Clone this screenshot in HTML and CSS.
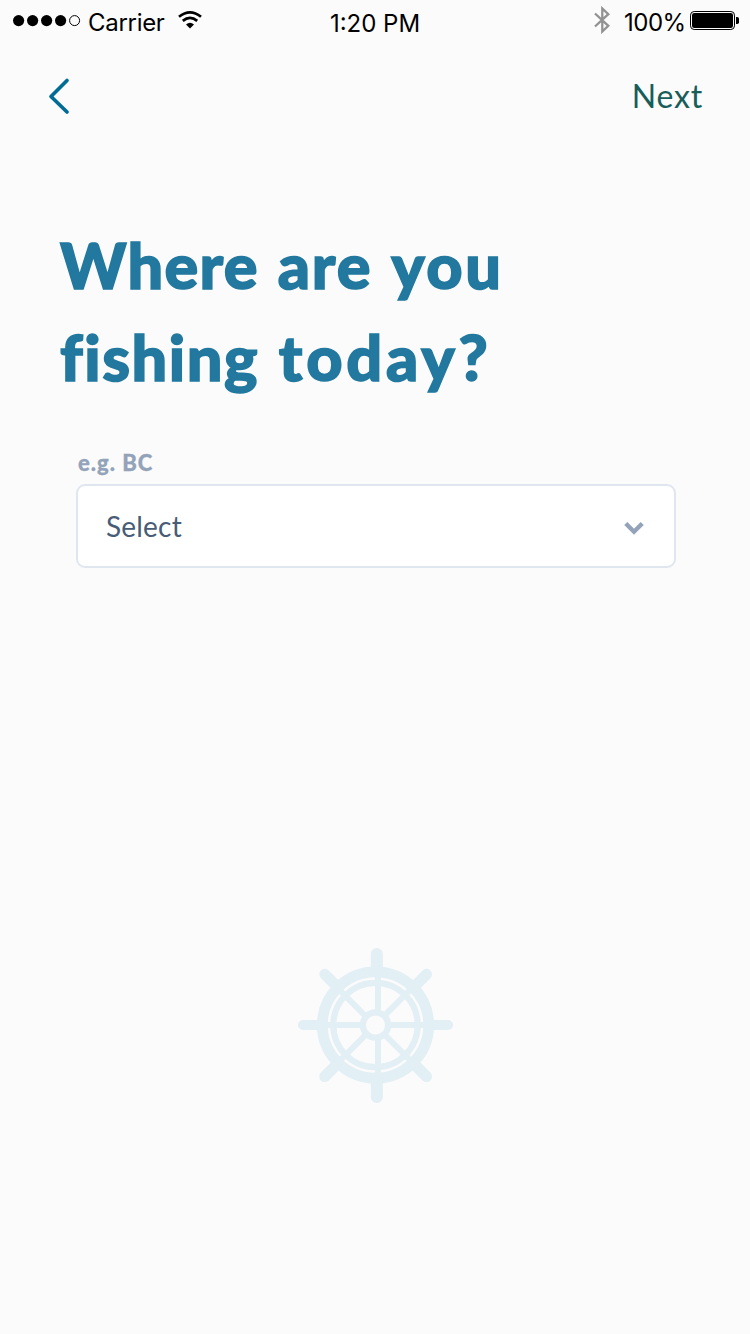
FILE: index.html
```html
<!DOCTYPE html>
<html lang="en">
<head>
<meta charset="utf-8">
<title>Fishing location</title>
<link rel="stylesheet" href="styles.css">
</head>
<body>
<div class="screen">
  <header class="status">
    <div class="status-left">
      <svg class="dots" width="68" height="12" viewBox="0 0 68 12"><circle cx="5.6" cy="5.6" r="5.6"/><circle cx="19.6" cy="5.6" r="5.6"/><circle cx="33.6" cy="5.6" r="5.6"/><circle cx="47.6" cy="5.6" r="5.6"/><circle cx="61.6" cy="5.6" r="5" fill="none" stroke="#000" stroke-width="1"/></svg>
      <span class="carrier">Carrier</span>
      <svg class="wifi" width="24" height="18" viewBox="0 0 24 18"><g fill="none" stroke="#000" stroke-width="2.7"><path d="M1 5.8Q12-2.9 23 5.8"/><path d="M4.8 9.9Q12 4 19.2 9.9"/></g><path d="M8 13.5Q12 10.2 16 13.5L12 17.5Z"/></svg>
    </div>
    <span class="clock">1:20 PM</span>
    <div class="status-right">
      <svg class="bluetooth" width="16" height="28" viewBox="0 0 16 28"><path d="M1 7.5L14.3 19.8L8.3 25.5V2.500L14.300 8.200L1 20.500" fill="none" stroke="#929292" stroke-width="2.300"/></svg>
      <span class="percent">100%</span>
      <svg class="battery" width="50" height="20" viewBox="0 0 50 20"><rect x=".5" y=".5" width="44" height="18" rx="3.7" fill="none" stroke="#000"/><rect x="2" y="2" width="41" height="15" rx="2.3"/><path d="M46 6h1.2q1.8 0 1.8 1.8v3.4q0 1.8-1.8 1.8H46z"/></svg>
    </div>
  </header>
  <nav class="nav">
    <svg class="back" width="24" height="38" viewBox="0 0 24 38"><path d="M20 3.500L4 19.500L20 35" fill="none" stroke="#006c96" stroke-width="3.700" stroke-linecap="round" stroke-linejoin="round"/></svg>
    <span class="next">Next</span>
  </nav>
  <main class="content">
    <h1 class="title">
      <span class="line"><span class="w-where">Where</span> <span class="w-are">are</span> <span class="w-you">you</span></span>
      <span class="line"><span class="w-fishing">fishing</span> <span class="w-today">today?</span></span>
    </h1>
    <div class="field">
      <span class="label">e.g. BC</span>
      <div class="select">
        <span class="value">Select</span>
        <svg class="chevron" width="22" height="16" viewBox="0 0 22 16"><path d="M2.8 3.500L11 11.700L19.200 3.500" fill="none" stroke="#93a3b9" stroke-width="4.400"/></svg>
      </div>
    </div>
  </main>
  <svg class="wheel" width="160" height="160" viewBox="0 0 160 160" fill="none" stroke="#e2eff5">
    <circle cx="80.5" cy="80" r="53.2" stroke-width="10.8"/>
    <circle cx="80.5" cy="80" r="42.2" stroke-width="6.2"/>
    <circle cx="80.5" cy="80" r="12.7" stroke-width="6.2"/>
    <g stroke-width="6">
      <path d="M83 28v39M83 93v39M28.500 80h39M93 80h39"/>
      <path d="M42.500 43l29 29M89 89l29 29M42.500 118l29-29M89 71l29-29"/>
    </g>
    <g stroke-linecap="round">
      <path stroke-width="12" d="M81.800 9v18M81.800 133v19"/>
      <path stroke-width="10" d="M8 80h18M135 80h18"/>
      <path stroke-width="11" d="M29.800 29.300l13 13M131.500 29.300l-13 13M29.800 131.500l13-13M131.500 131.500l-13-13"/>
    </g>
  </svg>
</div>
</body>
</html>
```
FILE: styles.css
```css
* { box-sizing: border-box; }
body { margin: 0; background: #fbfbfb; }
.screen {
  height: 1334px;
  overflow: hidden;
  display: flex;
  flex-direction: column;
  background: #fbfbfb;
  font-family: Lato, sans-serif;
}
.screen svg { display: block; flex: none; }
.status {
  height: 40px;
  display: grid;
  grid-template-columns: 1fr auto 1fr;
  font: 400 24px/29px Inter, sans-serif;
  color: #000;
}
.status-left, .status-right { display: flex; align-items: flex-start; }
.status-left { padding-left: 13px; }
.status-right { justify-content: flex-end; padding-right: 10px; }
.dots { margin-top: 15px; }
.carrier { margin: 8px 0 0 7px; letter-spacing: -0.3px; width: 77px; }
.wifi { margin: 11px 0 0 13px; }
.clock { margin-top: 9px; }
.bluetooth { margin: 6px 14px 0 0; }
.percent { margin-top: 8px; width: 61px; margin-right: 5px; letter-spacing: -0.5px; }
.battery { margin-top: 11px; }
.nav {
  height: 112px;
  padding: 37px 47px 0 47px;
  display: flex;
  justify-content: space-between;
  align-items: flex-start;
}
.next {
  color: #185d59;
  font-size: 32px;
  line-height: 37px;
  letter-spacing: 0.8px;
}
.content { padding: 67px 74px 0 60px; }
.title {
  margin: 0;
  color: #22789e;
  font-size: 63px;
  font-weight: 900;
  line-height: 92px;
  font-variant-ligatures: none;
  -webkit-text-stroke: 1.5px #22789e;
}
.line { display: block; white-space: nowrap; }
.w-where { letter-spacing: 1.3px; margin-right: 4px; }
.w-are { letter-spacing: 1.8px; margin-right: 4px; }
.w-you { letter-spacing: 2.6px; }
.w-fishing { letter-spacing: 1.5px; margin-right: 5px; }
.w-today { letter-spacing: 3.8px; }
.field { margin: 48px 0 0 16px; }
.label {
  display: block;
  padding-left: 2px;
  color: #93a3b9;
  font-size: 22px;
  font-weight: 900;
  line-height: 24px;
  height: 33px;
  letter-spacing: 1px;
  -webkit-text-stroke: 0.3px #93a3b9;
}
.select {
  width: 600px;
  height: 84px;
  padding: 0 29px 0 28px;
  display: flex;
  align-items: center;
  justify-content: space-between;
  border: 2px solid #e0e6f0;
  border-radius: 9px;
  background: #fff;
}
.value { color: #475c76; font-size: 28px; letter-spacing: 0.2px; }
.chevron { margin-top: 4px; }
.wheel { margin: 377px 0 0 295px; }
```
